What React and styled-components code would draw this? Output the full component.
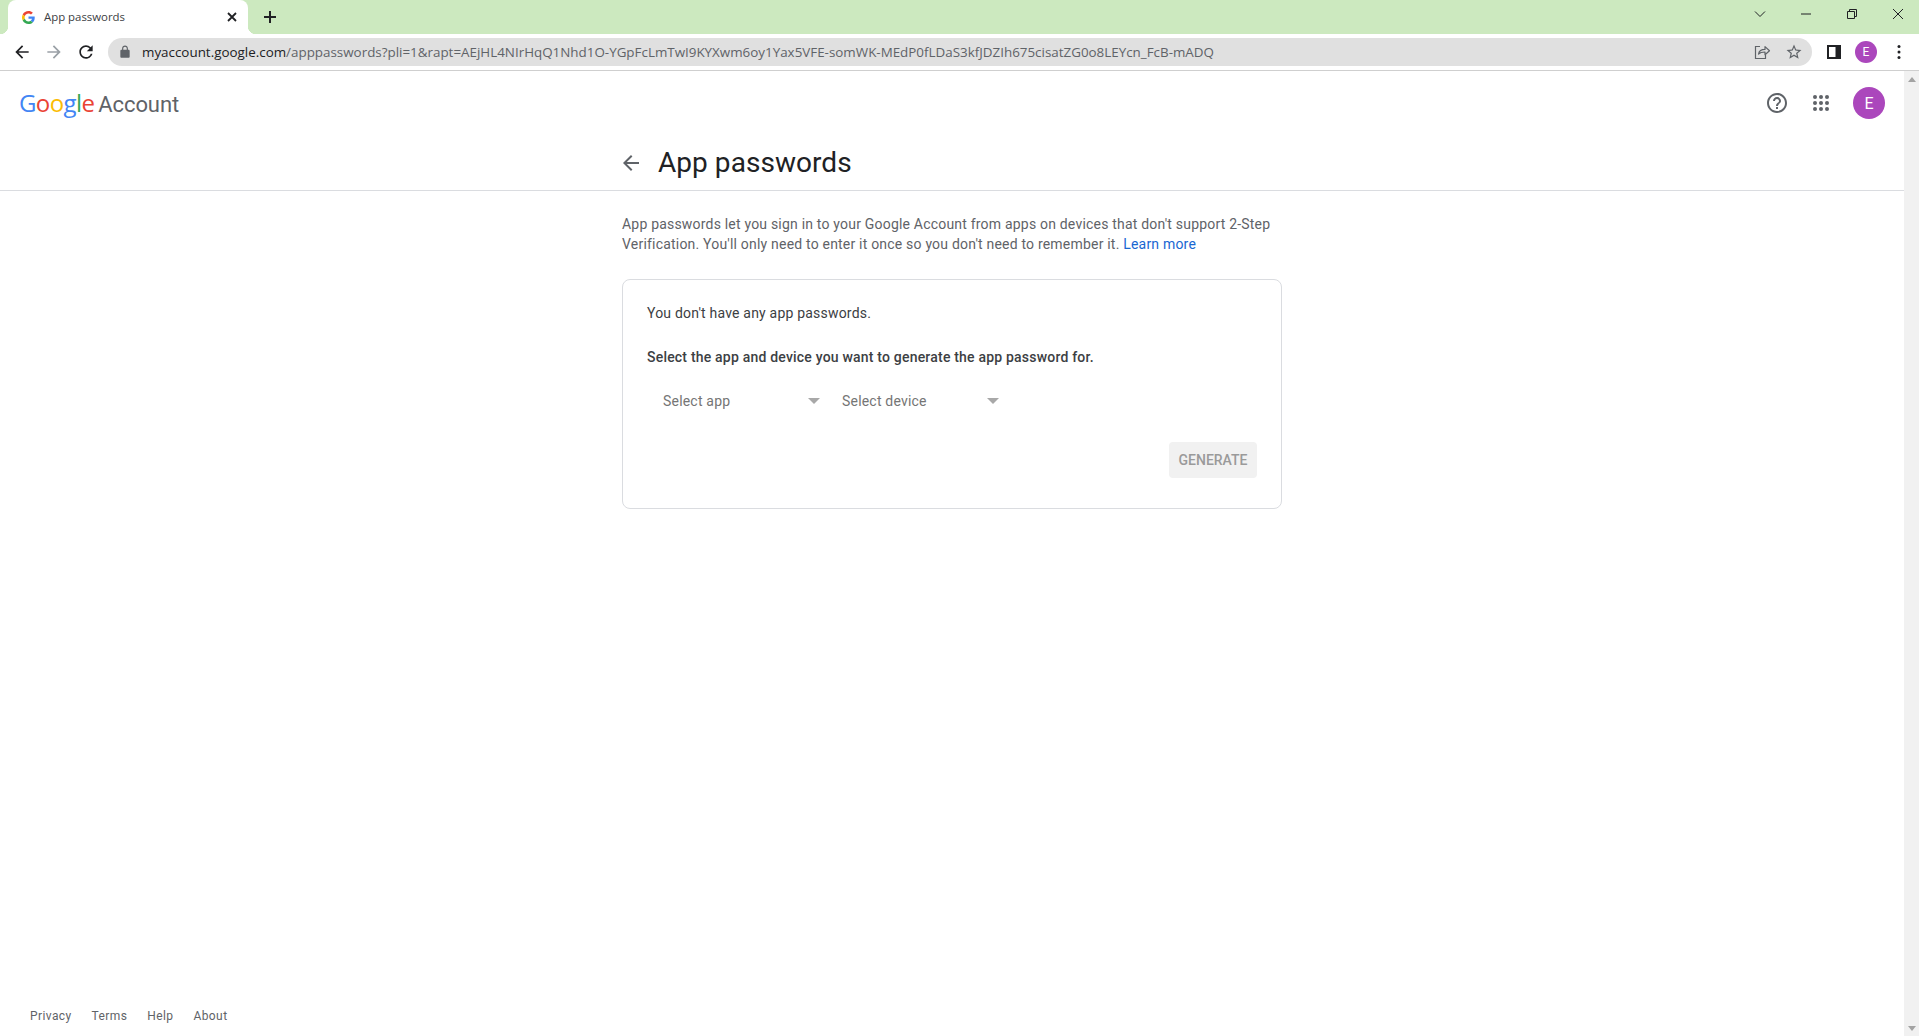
import React from 'react';
import styled, { createGlobalStyle } from 'styled-components';

const URL_HOST = 'myaccount.google.com';
const URL_PATH = '/apppasswords?pli=1&rapt=AEjHL4NIrHqQ1Nhd1O-YGpFcLmTwI9KYXwm6oy1Yax5VFE-somWK-MEdP0fLDaS3kfJDZIh675cisatZG0o8LEYcn_FcB-mADQ';
const FOOTER_LINKS = ['Privacy', 'Terms', 'Help', 'About'];
const LOGO_LETTERS = [
  ['G', '#4285f4'],
  ['o', '#ea4335'],
  ['o', '#fbbc05'],
  ['g', '#4285f4'],
  ['l', '#34a853'],
  ['e', '#ea4335'],
];

const GlobalStyle = createGlobalStyle`
  html, body {
    margin: 0;
    height: 100%;
    overflow: hidden;
    background: #fff;
    font-family: Roboto, sans-serif;
  }
  #root {
    height: 100%;
  }
`;

const Page = styled.div`
  display: flex;
  flex-direction: column;
  height: 100%;
`;

const TabStrip = styled.div`
  display: flex;
  align-items: stretch;
  height: 34px;
  padding-left: 8px;
  background: #cce9bf;
  flex: none;
`;

const Tab = styled.div`
  position: relative;
  display: flex;
  align-items: center;
  width: 240px;
  box-sizing: border-box;
  padding: 0 8px 0 14px;
  background: #fff;
  border-radius: 8px 8px 0 0;
  &::before,
  &::after {
    content: '';
    position: absolute;
    bottom: 0;
    width: 8px;
    height: 8px;
  }
  &::before {
    left: -8px;
    background: radial-gradient(circle at 0 0, #cce9bf 8px, #fff 8.5px);
  }
  &::after {
    right: -8px;
    background: radial-gradient(circle at 100% 0, #cce9bf 8px, #fff 8.5px);
  }
`;

const TabTitle = styled.span`
  flex: 1;
  margin: 0 0 1px 9px;
  font-family: 'Open Sans', sans-serif;
  font-size: 11.4px;
  color: #3c4043;
`;

const NewTab = styled.div`
  display: flex;
  align-items: center;
  justify-content: center;
  width: 28px;
  margin-left: 8px;
`;

const WindowControls = styled.div`
  display: flex;
  align-items: center;
  margin: 0 -2px 0 auto;
`;

const WindowButton = styled.div`
  display: flex;
  align-items: center;
  justify-content: center;
  width: 46px;
  height: 28px;
  margin-bottom: 6px;
`;

const Toolbar = styled.div`
  display: flex;
  align-items: center;
  height: 36px;
  padding-left: 6px;
  background: #fff;
  border-bottom: 1px solid #cfcfcf;
  flex: none;
`;

const NavButton = styled.div`
  display: flex;
  align-items: center;
  justify-content: center;
  width: 32px;
  height: 28px;
  flex: none;
`;

const MenuButton = styled(NavButton)`
  margin-left: 1px;
`;

const AddressBar = styled.div`
  display: flex;
  align-items: center;
  width: 1704px;
  height: 28px;
  margin-left: 6px;
  padding: 0 2px 0 10px;
  box-sizing: border-box;
  border-radius: 14px;
  background: #e0e0e0;
  flex: none;
`;

const UrlText = styled.div`
  flex: 1;
  margin-left: 10px;
  font-family: 'Open Sans', sans-serif;
  font-size: 13.4px;
  white-space: nowrap;
  color: #5f6368;
  span {
    color: #202124;
  }
`;

const BarIcon = styled.div`
  display: flex;
  align-items: center;
  justify-content: center;
  width: 32px;
  flex: none;
`;

const ToolbarEnd = styled.div`
  display: flex;
  align-items: center;
  margin-left: 6px;
`;

const Avatar = styled.div`
  display: flex;
  align-items: center;
  justify-content: center;
  width: ${(props) => props.$size}px;
  height: ${(props) => props.$size}px;
  border-radius: 50%;
  background: #ab47bc;
  color: #fff;
  font-family: Roboto, sans-serif;
  font-size: ${(props) => props.$font}px;
  flex: none;
`;

const AccountAvatar = styled(Avatar)`
  margin-left: 10px;
`;

const Viewport = styled.div`
  display: flex;
  flex: 1;
  min-height: 0;
`;

const Content = styled.main`
  display: flex;
  flex-direction: column;
  flex: 1;
  min-width: 0;
`;

const Scrollbar = styled.div`
  display: flex;
  flex-direction: column;
  justify-content: space-between;
  align-items: center;
  width: 15px;
  padding: 6px 0 5px;
  box-sizing: border-box;
  background: #f1f1f1;
  flex: none;
`;

const ScrollArrow = styled.div`
  width: 0;
  height: 0;
  border-left: 4.5px solid transparent;
  border-right: 4.5px solid transparent;
  ${(props) => (props.$down ? 'border-top: 5px solid #a3a3a3;' : 'border-bottom: 5px solid #a3a3a3;')}
`;

const AccountBar = styled.header`
  display: flex;
  align-items: center;
  height: 66px;
  padding: 0 19px 2px 19px;
  box-sizing: border-box;
  flex: none;
`;

const Logo = styled.div`
  display: flex;
  align-items: baseline;
  margin-bottom: 2px;
  font-family: 'Open Sans', sans-serif;
  font-size: 24px;
  letter-spacing: -0.6px;
`;

const LogoWord = styled.span`
  margin-right: 4px;
`;

const LogoLetter = styled.span`
  color: ${(props) => props.$colour};
`;

const LogoSuffix = styled.span`
  font-family: Roboto, sans-serif;
  font-size: 22px;
  letter-spacing: -0.1px;
  color: #5f6368;
`;

const AccountActions = styled.div`
  display: flex;
  align-items: center;
  margin-left: auto;
`;

const ActionIcon = styled.div`
  display: flex;
  align-items: center;
  justify-content: center;
  width: 44px;
`;

const TitleBand = styled.div`
  height: 53px;
  border-bottom: 1px solid #dadce0;
  flex: none;
`;

const Column = styled.div`
  width: 660px;
  margin: 0 auto;
`;

const TitleRow = styled(Column)`
  display: flex;
  align-items: center;
  height: 52px;
`;

const BackIcon = styled.span`
  display: flex;
  margin-left: -3px;
`;

const Title = styled.h1`
  margin: 0 0 1px 15px;
  font-family: Roboto, sans-serif;
  font-size: 28px;
  font-weight: 400;
  letter-spacing: 0.05px;
  color: #202124;
`;

const Intro = styled.p`
  margin: 23px 0 25px;
  font-size: 14px;
  line-height: 20px;
  letter-spacing: 0.2px;
  color: #5f6368;
  a {
    color: #1967d2;
    text-decoration: none;
  }
`;

const Card = styled.section`
  height: 230px;
  box-sizing: border-box;
  padding: 23px 24px 0;
  border: 1px solid #dadce0;
  border-radius: 8px;
`;

const CardText = styled.p`
  margin: 0 0 24px;
  font-size: 14px;
  line-height: 20px;
  letter-spacing: 0.2px;
  font-weight: ${(props) => (props.$strong ? 500 : 400)};
  color: #3c4043;
`;

const SelectRow = styled.div`
  display: flex;
  height: 36px;
  margin-top: -8px;
`;

const Select = styled.div`
  display: flex;
  align-items: center;
  justify-content: space-between;
  width: 179px;
  box-sizing: border-box;
  padding: 0 6px 0 16px;
  font-size: 14px;
  letter-spacing: 0.2px;
  color: #757575;
`;

const SelectArrow = styled.span`
  width: 0;
  height: 0;
  border-left: 6px solid transparent;
  border-right: 6px solid transparent;
  border-top: 6px solid #a8a8a8;
`;

const ActionRow = styled.div`
  display: flex;
  justify-content: flex-end;
  margin-top: 23px;
`;

const GenerateButton = styled.button`
  width: 88px;
  height: 36px;
  padding: 0;
  border: 0;
  border-radius: 4px;
  background: #f1f1f1;
  color: #9a9a9a;
  font-family: Roboto, sans-serif;
  font-size: 14px;
  font-weight: 500;
`;

const Footer = styled.footer`
  display: flex;
  gap: 20px;
  margin-top: auto;
  padding: 0 0 12px 30px;
  font-size: 12px;
  line-height: 16px;
  letter-spacing: 0.4px;
  color: #5f6368;
`;

const GoogleG = ({ size }) => (
  <svg width={size} height={size} viewBox="0 0 48 48">
    <path fill="#EA4335" d="M24 9.5c3.54 0 6.71 1.22 9.21 3.6l6.85-6.85C35.9 2.38 30.47 0 24 0 14.62 0 6.51 5.38 2.56 13.22l7.98 6.19C12.43 13.72 17.74 9.5 24 9.5z" />
    <path fill="#4285F4" d="M46.98 24.55c0-1.57-.15-3.09-.38-4.55H24v9.02h12.94c-.58 2.96-2.26 5.48-4.78 7.18l7.73 6c4.51-4.18 7.09-10.36 7.09-17.65z" />
    <path fill="#FBBC05" d="M10.53 28.59c-.48-1.45-.76-2.99-.76-4.59s.27-3.14.76-4.59l-7.98-6.19C.92 16.46 0 20.12 0 24c0 3.88.92 7.54 2.56 10.78l7.97-6.19z" />
    <path fill="#34A853" d="M24 48c6.48 0 11.93-2.13 15.89-5.81l-7.73-6c-2.15 1.45-4.92 2.3-8.16 2.3-6.26 0-11.57-4.22-13.47-9.91l-7.98 6.19C6.51 42.62 14.62 48 24 48z" />
  </svg>
);

const Icon = ({ d, size = 24, color = '#202124', box = 24 }) => (
  <svg width={size} height={size} viewBox={`0 0 ${box} ${box}`} fill={color}>
    <path d={d} />
  </svg>
);

const ARROW_BACK = 'M20 11H7.83l5.59-5.59L12 4l-8 8 8 8 1.41-1.41L7.83 13H20v-2z';
const ARROW_FORWARD = 'M4 11h12.17l-5.59-5.59L12 4l8 8-8 8-1.41-1.41L16.17 13H4v-2z';
const RELOAD = 'M17.65 6.35A7.96 7.96 0 0 0 12 4c-4.42 0-7.99 3.58-7.99 8s3.57 8 7.99 8c3.73 0 6.84-2.55 7.73-6h-2.08A5.99 5.99 0 0 1 12 18c-3.31 0-6-2.69-6-6s2.69-6 6-6c1.66 0 3.14.69 4.22 1.78L13 11h7V4l-2.35 2.35z';
const LOCK = 'M18 8h-1V6c0-2.76-2.24-5-5-5S7 3.24 7 6v2H6c-1.1 0-2 .9-2 2v10c0 1.1.9 2 2 2h12c1.1 0 2-.9 2-2V10c0-1.1-.9-2-2-2zM9 6c0-1.66 1.34-3 3-3s3 1.34 3 3v2H9V6z';
const HELP = 'M11 18h2v-2h-2v2zm1-16C6.48 2 2 6.48 2 12s4.48 10 10 10 10-4.48 10-10S17.52 2 12 2zm0 18c-4.41 0-8-3.59-8-8s3.59-8 8-8 8 3.59 8 8-3.59 8-8 8zm0-14c-2.21 0-4 1.79-4 4h2c0-1.1.9-2 2-2s2 .9 2 2c0 2-3 1.75-3 5h2c0-2.25 3-2.5 3-5 0-2.21-1.79-4-4-4z';
const STAR = 'M22 9.24l-7.19-.62L12 2 9.19 8.63 2 9.24l5.46 4.73L5.82 21 12 17.27 18.18 21l-1.63-7.03L22 9.24zM12 15.4l-3.76 2.27 1-4.28-3.32-2.88 4.38-.38L12 6.1l1.71 4.04 4.38.38-3.32 2.88 1 4.28L12 15.4z';

const AppsGrid = () => (
  <svg width="24" height="24" viewBox="0 0 24 24" fill="#5f6368">
    {[6, 12, 18].flatMap((cy) => [6, 12, 18].map((cx) => (
      <circle key={`${cx}-${cy}`} cx={cx} cy={cy} r="2" />
    )))}
  </svg>
);

const ShareIcon = () => (
  <svg width="18" height="18" viewBox="0 0 18 18" fill="none" stroke="#5f6368" strokeWidth="1.2">
    <path d="M7 3.5H2.5v12h10V12" />
    <path d="M5.5 11c.6-3 3-4.6 6.5-4.6V3.6l4.5 4.1-4.5 4V9c-2.7 0-5 .4-6.5 2z" strokeLinejoin="round" />
  </svg>
);

const SidePanelIcon = () => (
  <svg width="16" height="16" viewBox="0 0 16 16">
    <rect x="1" y="1" width="14" height="14" fill="#202124" />
    <rect x="3" y="3" width="6.5" height="10" fill="#fff" />
  </svg>
);

const Kebab = () => (
  <svg width="16" height="16" viewBox="0 0 16 16" fill="#202124">
    <circle cx="8" cy="2.5" r="1.5" />
    <circle cx="8" cy="8" r="1.5" />
    <circle cx="8" cy="13.5" r="1.5" />
  </svg>
);

const WindowGlyph = ({ children }) => (
  <svg width="12" height="12" viewBox="0 0 12 12" fill="none" stroke="#202124" strokeWidth="1">
    {children}
  </svg>
);

const App = () => (
  <Page>
    <GlobalStyle />
    <TabStrip>
      <Tab>
        <GoogleG size={13} />
        <TabTitle>App passwords</TabTitle>
        <svg width="16" height="16" viewBox="0 0 16 16" stroke="#202124" strokeWidth="1.8">
          <path d="M4 4l8 8M12 4l-8 8" />
        </svg>
      </Tab>
      <NewTab>
        <svg width="16" height="16" viewBox="0 0 16 16" stroke="#202124" strokeWidth="2">
          <path d="M8 2v12M2 8h12" />
        </svg>
      </NewTab>
      <WindowControls>
        <WindowButton>
          <WindowGlyph><path d="M1 3.5l5 5 5-5" /></WindowGlyph>
        </WindowButton>
        <WindowButton>
          <WindowGlyph><path d="M1 6h10" /></WindowGlyph>
        </WindowButton>
        <WindowButton>
          <WindowGlyph><path d="M1.5 3.5h7v7h-7zM3.5 3.5v-2h7v7h-2" /></WindowGlyph>
        </WindowButton>
        <WindowButton>
          <WindowGlyph><path d="M1 1l10 10M11 1L1 11" /></WindowGlyph>
        </WindowButton>
      </WindowControls>
    </TabStrip>

    <Toolbar>
      <NavButton><Icon d={ARROW_BACK} size={20} /></NavButton>
      <NavButton><Icon d={ARROW_FORWARD} size={20} color="#9aa0a6" /></NavButton>
      <NavButton><Icon d={RELOAD} size={20} /></NavButton>
      <AddressBar>
        <Icon d={LOCK} size={14} color="#5f6368" />
        <UrlText><span>{URL_HOST}</span>{URL_PATH}</UrlText>
        <BarIcon><ShareIcon /></BarIcon>
        <BarIcon><Icon d={STAR} size={18} color="#5f6368" /></BarIcon>
      </AddressBar>
      <ToolbarEnd>
        <NavButton><SidePanelIcon /></NavButton>
        <NavButton><Avatar $size={22} $font={12}>E</Avatar></NavButton>
        <MenuButton><Kebab /></MenuButton>
      </ToolbarEnd>
    </Toolbar>

    <Viewport>
      <Content>
        <AccountBar>
          <Logo>
            <LogoWord>
              {LOGO_LETTERS.map(([letter, colour], i) => (
                <LogoLetter key={i} $colour={colour}>{letter}</LogoLetter>
              ))}
            </LogoWord>
            <LogoSuffix>Account</LogoSuffix>
          </Logo>
          <AccountActions>
            <ActionIcon><Icon d={HELP} color="#5f6368" /></ActionIcon>
            <ActionIcon><AppsGrid /></ActionIcon>
            <AccountAvatar $size={32} $font={16}>E</AccountAvatar>
          </AccountActions>
        </AccountBar>

        <TitleBand>
          <TitleRow>
            <BackIcon><Icon d={ARROW_BACK} color="#5f6368" /></BackIcon>
            <Title>App passwords</Title>
          </TitleRow>
        </TitleBand>

        <Column>
          <Intro>
            App passwords let you sign in to your Google Account from apps on devices that don't support 2-Step
            Verification. You'll only need to enter it once so you don't need to remember it.{' '}
            <a href="#learn">Learn more</a>
          </Intro>
          <Card>
            <CardText>You don't have any app passwords.</CardText>
            <CardText $strong>Select the app and device you want to generate the app password for.</CardText>
            <SelectRow>
              <Select>Select app<SelectArrow /></Select>
              <Select>Select device<SelectArrow /></Select>
            </SelectRow>
            <ActionRow>
              <GenerateButton disabled>GENERATE</GenerateButton>
            </ActionRow>
          </Card>
        </Column>

        <Footer>
          {FOOTER_LINKS.map((link) => <span key={link}>{link}</span>)}
        </Footer>
      </Content>
      <Scrollbar>
        <ScrollArrow />
        <ScrollArrow $down />
      </Scrollbar>
    </Viewport>
  </Page>
);

export default App;
